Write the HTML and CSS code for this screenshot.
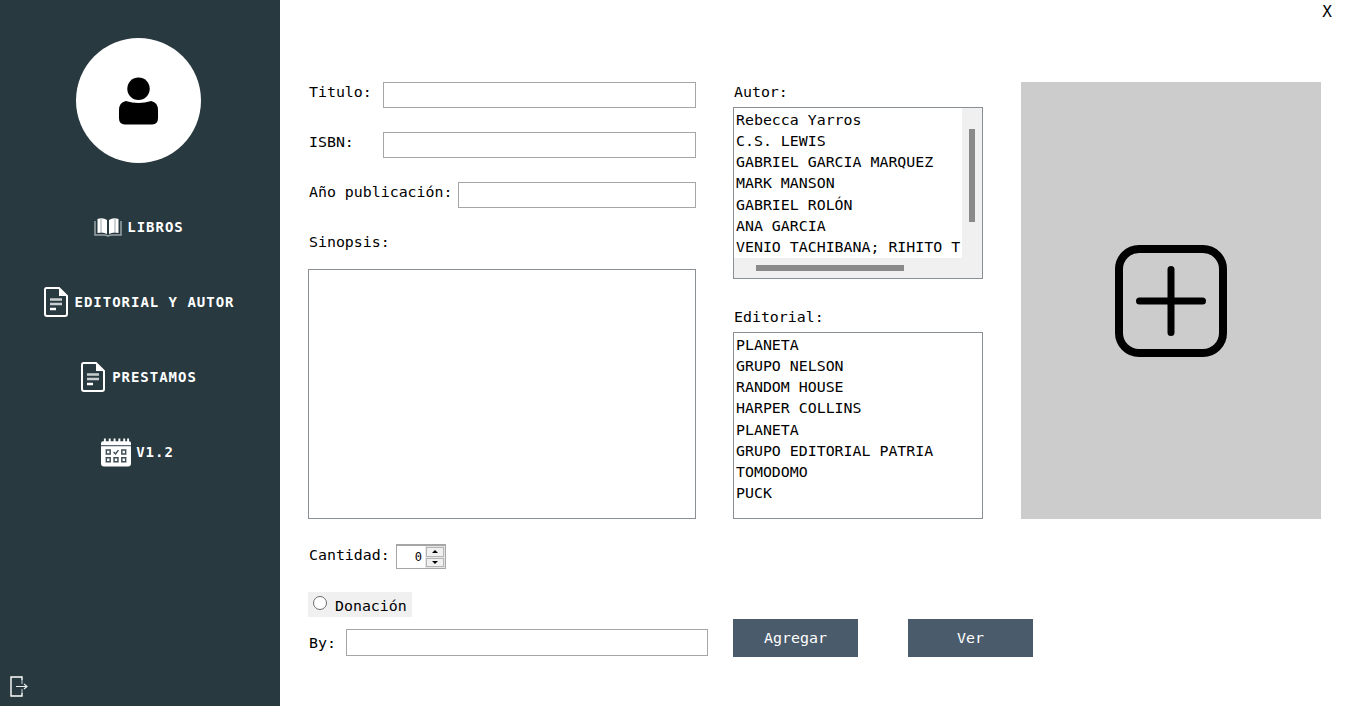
FILE: index.html
```html
<!DOCTYPE html>
<html lang="es">
<head>
  <meta charset="UTF-8">
  <meta name="viewport" content="width=device-width, initial-scale=1.0">
  <title>Agregar libro</title>
  <link rel="stylesheet" href="styles.css">
</head>
<body>
  <aside class="sidebar">
    <div class="avatar">
      <svg width="41" height="49" viewBox="0 0 42 50">
        <circle cx="21" cy="12" r="11.5" fill="#000"/>
        <path d="M8 24.500 Q21 28.500 34 24.500 Q41 26 41 34 L41 42 Q41 48.500 35 48.500 L7 48.500 Q1 48.500 1 42 L1 34 Q1 26 8 24.500Z" fill="#000"/>
      </svg>
    </div>
    <nav class="menu">
      <a class="menu-item">
        <svg width="28" height="20" viewBox="0 0 28 20" fill="none">
          <path d="M1 4 L1 18 L11 18 L14 19 L17 18 L27 18 L27 4" stroke="#9aa5a8" stroke-width="1.500"/>
          <path d="M3.500 2 Q9 0 13 3 L13 17 Q9 14.500 3.500 16Z M24.500 2 Q19 0 15 3 L15 17 Q19 14.500 24.500 16Z" fill="#fff"/>
          <path d="M7 2 L7 15 M21 2 L21 15" stroke="#9aa5a8" stroke-width="1"/>
        </svg>
        <span>LIBROS</span>
      </a>
      <a class="menu-item menu-item-doc">
        <svg width="24" height="30" viewBox="0 0 24 30" fill="none">
          <path d="M2.500 1 L15 1 L23 9 L23 27 Q23 29 21 29 L3 29 Q1 29 1 27 L1 3 Q1 1 2.500 1Z" stroke="#fff" stroke-width="2"/>
          <path d="M15 1 L15 9 L23 9Z" fill="#fff"/>
          <path d="M6 12.500 H18 M6 17 H18" stroke="#c9cfd0" stroke-width="2.500"/>
          <path d="M6 22 H12" stroke="#fff" stroke-width="2.500"/>
        </svg>
        <span>EDITORIAL Y AUTOR</span>
      </a>
      <a class="menu-item menu-item-doc">
        <svg width="24" height="30" viewBox="0 0 24 30" fill="none">
          <path d="M2.500 1 L15 1 L23 9 L23 27 Q23 29 21 29 L3 29 Q1 29 1 27 L1 3 Q1 1 2.500 1Z" stroke="#fff" stroke-width="2"/>
          <path d="M15 1 L15 9 L23 9Z" fill="#fff"/>
          <path d="M6 12.500 H18 M6 17 H18" stroke="#c9cfd0" stroke-width="2.500"/>
          <path d="M6 22 H12" stroke="#fff" stroke-width="2.500"/>
        </svg>
        <span>PRESTAMOS</span>
      </a>
      <a class="menu-item menu-item-cal">
        <svg width="30" height="30" viewBox="0 0 31 30" fill="none">
          <path d="M0 6 Q0 4 2 4 L29 4 Q31 4 31 6 L31 27 Q31 30 28 30 L3 30 Q0 30 0 27Z" fill="#fff"/>
          <path d="M4 1 V5 M9 1 V5 M14 1 V5 M19 1 V5 M24 1 V5 M28 1 V5" stroke="#fff" stroke-width="2"/>
          <path d="M0 8.500 H31" stroke="#28393f" stroke-width="1"/>
          <path d="M5.500 13 h4 v4 h-4z M21.500 13 h4 v4 h-4z M5.500 21 h4 v4 h-4z M13.500 21 h4 v4 h-4z M21.500 21 h4 v4 h-4z" stroke="#3d4d52" stroke-width="1.500"/>
          <path d="M13 15 L15 17 L18 13" stroke="#3d4d52" stroke-width="1.500"/>
        </svg>
        <span>V1.2</span>
      </a>
    </nav>
    <a class="logout">
      <svg width="18" height="21" viewBox="0 0 18 21" fill="none">
        <path d="M12 4 V1 H1 V20 H12 V17" stroke="#fff" stroke-width="1.400"/>
        <path d="M12 4 V8 M12 13 V17" stroke="#7b878b" stroke-width="2"/>
        <path d="M6 10.500 H17 M14 8 L17 10.500 L14 13" stroke="#e8ecec" stroke-width="1.200"/>
      </svg>
    </a>
  </aside>

  <main class="content">
    <button class="close">X</button>

    <section class="form-left">
      <div class="field field-titulo">
        <label class="label-fixed">Titulo:</label>
        <input class="input" type="text">
      </div>
      <div class="field field-isbn">
        <label class="label-fixed">ISBN:</label>
        <input class="input" type="text">
      </div>
      <div class="field field-anio">
        <label>Año publicación:</label>
        <input class="input" type="text">
      </div>
      <label class="label-sinopsis">Sinopsis:</label>
      <textarea class="sinopsis"></textarea>
      <div class="field field-cantidad">
        <label>Cantidad:</label>
        <div class="spinner">
          <span class="spinner-value">0</span>
          <div class="spinner-btns">
            <span class="spin-btn"><i class="arrow-up"></i></span>
            <span class="spin-btn"><i class="arrow-down"></i></span>
          </div>
        </div>
      </div>
      <div class="donacion">
        <span class="radio"></span>
        <span class="donacion-text">Donación</span>
      </div>
      <div class="field field-by">
        <label>By:</label>
        <input class="input" type="text">
      </div>
    </section>

    <section class="form-right">
      <div class="top-row">
        <div class="lists">
          <label class="label-list">Autor:</label>
          <div class="list-box list-autor">
            <ul class="list">
              <li>Rebecca Yarros</li>
              <li>C.S. LEWIS</li>
              <li>GABRIEL GARCIA MARQUEZ</li>
              <li>MARK MANSON</li>
              <li>GABRIEL ROLÓN</li>
              <li>ANA GARCIA</li>
              <li>VENIO TACHIBANA; RIHITO T</li>
            </ul>
            <div class="track-v"><span class="thumb-v"></span></div>
            <div class="track-h"><span class="thumb-h"></span></div>
            <div class="track-corner"></div>
          </div>
          <label class="label-list label-editorial">Editorial:</label>
          <div class="list-box list-editorial">
            <ul class="list">
              <li>PLANETA</li>
              <li>GRUPO NELSON</li>
              <li>RANDOM HOUSE</li>
              <li>HARPER COLLINS</li>
              <li>PLANETA</li>
              <li>GRUPO EDITORIAL PATRIA</li>
              <li>TOMODOMO</li>
              <li>PUCK</li>
            </ul>
          </div>
        </div>
        <div class="cover">
          <svg width="114" height="114" viewBox="0 0 114 114" fill="none" stroke="#000" stroke-linecap="round">
            <rect x="5" y="5" width="104" height="104" rx="20" stroke-width="8"/>
            <path d="M57 25.500 V88.500 M25.500 57 H88.500" stroke-width="7"/>
          </svg>
        </div>
      </div>
      <div class="actions">
        <button class="btn">Agregar</button>
        <button class="btn">Ver</button>
      </div>
    </section>
  </main>
</body>
</html>
```

FILE: styles.css
```css
:root {
  --sidebar: #28393f;
  --border: #a6a6a6;
  --track: #f0f0f0;
  --thumb: #8a8a8a;
  --button: #4a5b6b;
}
* { box-sizing: border-box; }
html, body { height: 100%; }
body {
  margin: 0;
  display: flex;
  height: 706px;
  overflow: hidden;
  background: #fff;
  color: #000;
  font-family: "DejaVu Sans Mono", "Liberation Mono", monospace;
  font-size: 14.900px;
}

/* menu lateral */
.sidebar {
  width: 280px;
  flex-shrink: 0;
  background: var(--sidebar);
  display: flex;
  flex-direction: column;
  align-items: center;
  padding-top: 38px;
  padding-right: 2px;
}
.avatar {
  width: 125px;
  height: 125px;
  margin-right: 1px;
  padding-top: 1px;
  border-radius: 50%;
  background: #fff;
  display: flex;
  align-items: center;
  justify-content: center;
}
.menu {
  display: flex;
  flex-direction: column;
  align-items: center;
  gap: 45px;
  margin-top: 49px;
}
.menu-item {
  display: flex;
  align-items: center;
  justify-content: center;
  gap: 5px;
  height: 30px;
  color: #fff;
  font-size: 14px;
  font-weight: bold;
  letter-spacing: 0.980px;
}
.menu-item-doc { gap: 7px; }
.menu-item-cal { margin-right: 3px; }
.logout {
  align-self: flex-start;
  margin-top: auto;
  margin-left: 10px;
  margin-bottom: 9px;
  height: 21px;
}

/* contenido */
.content {
  position: relative;
  flex: 1;
  display: flex;
  padding: 82px 0 0 28px;
}
.close {
  position: absolute;
  top: 2px;
  right: 13px;
  padding: 0;
  border: 0;
  background: none;
  font: inherit;
  font-size: 16px;
}
.form-left {
  width: 400px;
  display: flex;
  flex-direction: column;
  align-items: flex-start;
}
.field {
  display: flex;
  align-items: center;
  width: 388px;
}
.input {
  flex: 1;
  min-width: 0;
  height: 26px;
  border: 1px solid var(--border);
  background: #fff;
  outline: none;
}
.field label { position: relative; top: -3px; padding-left: 1px; }
.label-fixed { width: 75px; flex-shrink: 0; }
.field-isbn, .field-anio { margin-top: 24px; }
.field-anio label { width: 150px; flex-shrink: 0; }
.label-sinopsis { margin-top: 24px; padding-left: 1px; line-height: 20px; }
.sinopsis {
  display: block;
  width: 388px;
  height: 250px;
  margin-top: 17px;
  border: 1px solid #8a8f94;
  background: #fff;
  resize: none;
  outline: none;
}

.field-cantidad { margin-top: 25px; height: 25px; }
.field-cantidad label { top: -2px; width: 88px; flex-shrink: 0; }
.spinner {
  width: 50px;
  height: 25px;
  display: flex;
  border: 1px solid var(--border);
  border-top-width: 2px;
}
.spinner-value {
  flex: 1;
  text-align: right;
  font-size: 12px;
  line-height: 22px;
  padding-right: 3px;
}
.spinner-btns {
  width: 20px;
  display: flex;
  flex-direction: column;
  background: #e6e6e6;
  padding: 1px;
  gap: 1px;
}
.spin-btn {
  flex: 1;
  display: flex;
  align-items: center;
  justify-content: center;
  background: #f0f0f0;
  border: 1px solid #b5b5b5;
}
.arrow-up, .arrow-down {
  width: 0;
  height: 0;
  border-left: 3px solid transparent;
  border-right: 3px solid transparent;
}
.arrow-up { border-bottom: 3px solid #000; }
.arrow-down { border-top: 3px solid #000; }

.donacion {
  display: flex;
  align-items: center;
  gap: 8px;
  width: 104px;
  height: 25px;
  margin-top: 23px;
  padding-left: 5px;
  background: var(--track);
}
.donacion-text { padding-top: 2px; }
.radio {
  width: 14px;
  height: 14px;
  margin-top: -3px;
  border: 1px solid #6d6d6d;
  border-radius: 50%;
  background: #fff;
}
.field-by { width: 400px; margin-top: 12px; }
.field-by .input { height: 27px; }
.field-by label { top: 0; width: 38px; flex-shrink: 0; }

.form-right {
  margin-left: 25px;
  display: flex;
  flex-direction: column;
}
.top-row { display: flex; gap: 38px; }
.lists { width: 250px; display: flex; flex-direction: column; }
.label-list { height: 25px; padding: 2px 0 0 1px; line-height: 17px; }
.label-editorial { margin-top: 28px; }
.list-box {
  border: 1px solid #8a8f94;
  background: #fff;
  overflow: hidden;
}
.list {
  margin: 0;
  padding: 2px 0 0 2px;
  list-style: none;
  line-height: 21.150px;
  white-space: nowrap;
  overflow: hidden;
}
.list-autor {
  height: 172px;
  display: grid;
  grid-template-columns: 228px 1fr;
  grid-template-rows: 150px 1fr;
  background: var(--track);
}
.list-autor .list { background: #fff; }
.list-editorial { height: 187px; }
.track-v { padding: 21px 0 0 7px; }
.thumb-v { display: block; width: 6px; height: 93px; background: var(--thumb); }
.track-h { padding: 7px 0 0 22px; }
.thumb-h { display: block; width: 148px; height: 6px; background: var(--thumb); }

.cover {
  width: 300px;
  height: 437px;
  background: #ccc;
  display: flex;
  align-items: center;
  justify-content: center;
}
.actions { display: flex; gap: 50px; margin-top: 100px; }
.btn {
  width: 125px;
  height: 38px;
  border: 0;
  background: var(--button);
  color: #fff;
  font: inherit;
}
```
